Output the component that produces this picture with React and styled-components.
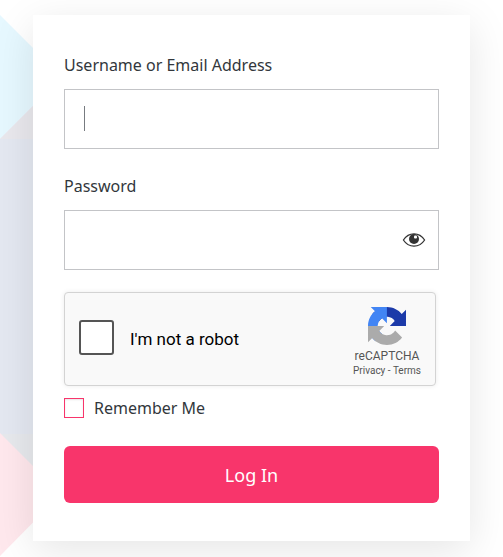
import React, { useState } from 'react';
import styled, { createGlobalStyle } from 'styled-components';

const colors = {
  accent: '#f8356b',
  text: '#32373c',
  border: '#c3c4c7',
  white: '#ffffff',
};

const GlobalStyle = createGlobalStyle`
  *,
  *::before,
  *::after {
    box-sizing: border-box;
  }
  body {
    margin: 0;
    background: ${colors.white};
    color: ${colors.text};
    font-family: 'Segoe UI', 'Noto Sans', 'Open Sans', sans-serif;
    font-size: 16px;
    line-height: 28px;
  }
`;

const Page = styled.main`
  position: relative;
  min-height: 100vh;
  padding: 15px 33px 16px;
  overflow: hidden;
`;

const Backdrop = styled.svg`
  position: absolute;
  top: 0;
  left: 0;
`;

const Card = styled.form`
  position: relative;
  display: flex;
  flex-direction: column;
  padding: 36px 31px 38px;
  background: ${colors.white};
  box-shadow: 0 10px 40px rgba(0, 0, 0, 0.1);
`;

const Field = styled.div`
  display: flex;
  flex-direction: column;
  gap: 10px;
  margin-bottom: ${(props) => props.$gap}px;
`;

const InputWrapper = styled.div`
  position: relative;
  display: flex;
`;

const TextInput = styled.input`
  flex: 1;
  min-width: 0;
  height: 60px;
  padding: 0 ${(props) => (props.$withToggle ? 48 : 19)}px 0 19px;
  border: 1px solid ${colors.border};
  border-radius: 0;
  outline: none;
  background: ${colors.white};
  color: ${colors.text};
  font: inherit;
`;

const Caret = styled.span`
  position: absolute;
  top: 17px;
  left: 20px;
  width: 1px;
  height: 25px;
  background: #777b80;
  pointer-events: none;
`;

const ToggleButton = styled.button`
  position: absolute;
  top: 0;
  right: 13px;
  bottom: 0;
  display: flex;
  align-items: center;
  padding: 0;
  border: 0;
  background: none;
  color: #333333;
  cursor: pointer;
`;

const Captcha = styled.div`
  display: flex;
  align-items: center;
  height: 94px;
  margin: 0 3px 12px 0;
  padding: 0 14px;
  border: 1px solid #d3d3d3;
  border-radius: 4px;
  background: #f9f9f9;
  box-shadow: 0 0 5px rgba(0, 0, 0, 0.08);
  color: #000000;
  font-family: Roboto, sans-serif;
  font-size: 17px;
`;

const CaptchaLabel = styled.label`
  display: flex;
  flex: 1;
  align-items: center;
  gap: 16px;
`;

const CaptchaCheckbox = styled.input`
  appearance: none;
  width: 35px;
  height: 35px;
  margin: 0 0 4px;
  border: 2px solid #555555;
  border-radius: 3px;
  background: ${colors.white};
  cursor: pointer;
  &:checked {
    background: #4d90fe;
  }
`;

const CaptchaBrand = styled.div`
  display: flex;
  flex-direction: column;
  align-items: center;
  padding-top: 7px;
  color: #555555;
`;

const BrandName = styled.div`
  margin-top: 3px;
  font-size: 12px;
  line-height: 16px;
`;

const BrandLinks = styled.div`
  font-size: 10px;
  line-height: 14px;
  a {
    color: inherit;
    text-decoration: none;
  }
`;

const RememberLabel = styled.label`
  display: flex;
  align-items: center;
  gap: 10px;
  margin-bottom: 28px;
  line-height: 20px;
`;

const RememberCheckbox = styled.input`
  appearance: none;
  width: 20px;
  height: 20px;
  margin: 0;
  border: 1px solid ${colors.accent};
  background: ${colors.white};
  box-shadow: inset 0 1px 2px rgba(0, 0, 0, 0.1);
  &:checked {
    background: ${colors.accent};
  }
`;

const SubmitButton = styled.button`
  height: 57px;
  padding: 0;
  border: 0;
  border-radius: 6px;
  background: ${colors.accent};
  color: ${colors.white};
  font: inherit;
  font-size: 18px;
  cursor: pointer;
`;

function EyeIcon() {
  return (
    <svg width="24" height="16" viewBox="0 0 24 16" aria-hidden="true">
      <path
        d="M1.400 8C4.200 3.700 7.700 1.800 12 1.800S19.800 3.700 22.600 8C19.800 12.300 16.300 14.200 12 14.200S4.200 12.300 1.400 8Z"
        fill="none"
        stroke="currentColor"
        strokeWidth="1.3"
        strokeLinejoin="round"
      />
      <circle cx="12" cy="7" r="5" fill="currentColor" />
      <rect x="12" y="3.500" width="3" height="3" rx="1" fill="#ffffff" />
    </svg>
  );
}

function CaptchaLogo() {
  return (
    <svg width="38" height="38" viewBox="0 0 64 64" aria-hidden="true">
      <path
        fill="#1c3aa9"
        d="M64 31.955l-.033-1.370V4.687l-7.160 7.160C50.948 4.674 42.033.093 32.050.093c-10.400 0-19.622 4.960-25.458 12.640l11.736 11.860a15.550 15.550 0 0 1 4.754-5.334c2.050-1.600 4.952-2.906 8.968-2.906.485 0 .860.057 1.135.163 4.976.393 9.288 3.140 11.828 7.124l-8.307 8.307L64 31.953"
      />
      <path
        fill="#4285f4"
        d="M31.862.094l-1.370.033H4.594l7.160 7.160C4.580 13.147 0 22.060 0 32.046c0 10.400 4.960 19.622 12.640 25.458L24.500 45.768a15.550 15.550 0 0 1-5.334-4.754c-1.600-2.050-2.906-4.952-2.906-8.968 0-.485.057-.860.163-1.135.393-4.976 3.140-9.288 7.124-11.828l8.307 8.307L31.860.095"
      />
      <path
        fill="#ababab"
        d="M.001 32.045l.033 1.370v25.898l7.160-7.160c5.860 7.173 14.774 11.754 24.760 11.754 10.400 0 19.622-4.960 25.458-12.640l-11.736-11.860a15.550 15.550 0 0 1-4.754 5.334c-2.050 1.600-4.952 2.906-8.968 2.906-.485 0-.860-.057-1.135-.163-4.976-.393-9.288-3.140-11.828-7.124l8.307-8.307c-10.522.040-22.400.066-27.295-.005"
      />
    </svg>
  );
}

function Shapes() {
  return (
    <Backdrop width="66" height="557" viewBox="0 0 66 557" aria-hidden="true">
      <path d="M0 15L62 77L0 139Z" fill="#e6f8ff" />
      <path d="M0 139L66 73V500L0 434Z" fill="#e4e8f1" />
      <path d="M0 139L66 73V139Z" fill="#e9e8ed" />
      <path d="M0 434H66V500Z" fill="#e7e9ed" />
      <path d="M0 433L61 494L0 556Z" fill="#ffe8ed" />
    </Backdrop>
  );
}

function App() {
  const [username, setUsername] = useState('');
  const [showPassword, setShowPassword] = useState(false);

  return (
    <>
      <GlobalStyle />
      <Page>
        <Shapes />
        <Card onSubmit={(e) => e.preventDefault()}>
          <Field $gap={23}>
            <label htmlFor="username">Username or Email Address</label>
            <InputWrapper>
              <TextInput
                id="username"
                type="text"
                autoComplete="username"
                value={username}
                onChange={(e) => setUsername(e.target.value)}
              />
              {username === '' && <Caret />}
            </InputWrapper>
          </Field>
          <Field $gap={22}>
            <label htmlFor="password">Password</label>
            <InputWrapper>
              <TextInput
                id="password"
                type={showPassword ? 'text' : 'password'}
                autoComplete="current-password"
                $withToggle
              />
              <ToggleButton
                type="button"
                aria-label="Show password"
                onClick={() => setShowPassword(!showPassword)}
              >
                <EyeIcon />
              </ToggleButton>
            </InputWrapper>
          </Field>
          <Captcha>
            <CaptchaLabel>
              <CaptchaCheckbox type="checkbox" />
              I&apos;m not a robot
            </CaptchaLabel>
            <CaptchaBrand>
              <CaptchaLogo />
              <BrandName>reCAPTCHA</BrandName>
              <BrandLinks>
                <a href="#privacy">Privacy</a> - <a href="#terms">Terms</a>
              </BrandLinks>
            </CaptchaBrand>
          </Captcha>
          <RememberLabel>
            <RememberCheckbox type="checkbox" />
            Remember Me
          </RememberLabel>
          <SubmitButton type="submit">Log In</SubmitButton>
        </Card>
      </Page>
    </>
  );
}

export default App;
